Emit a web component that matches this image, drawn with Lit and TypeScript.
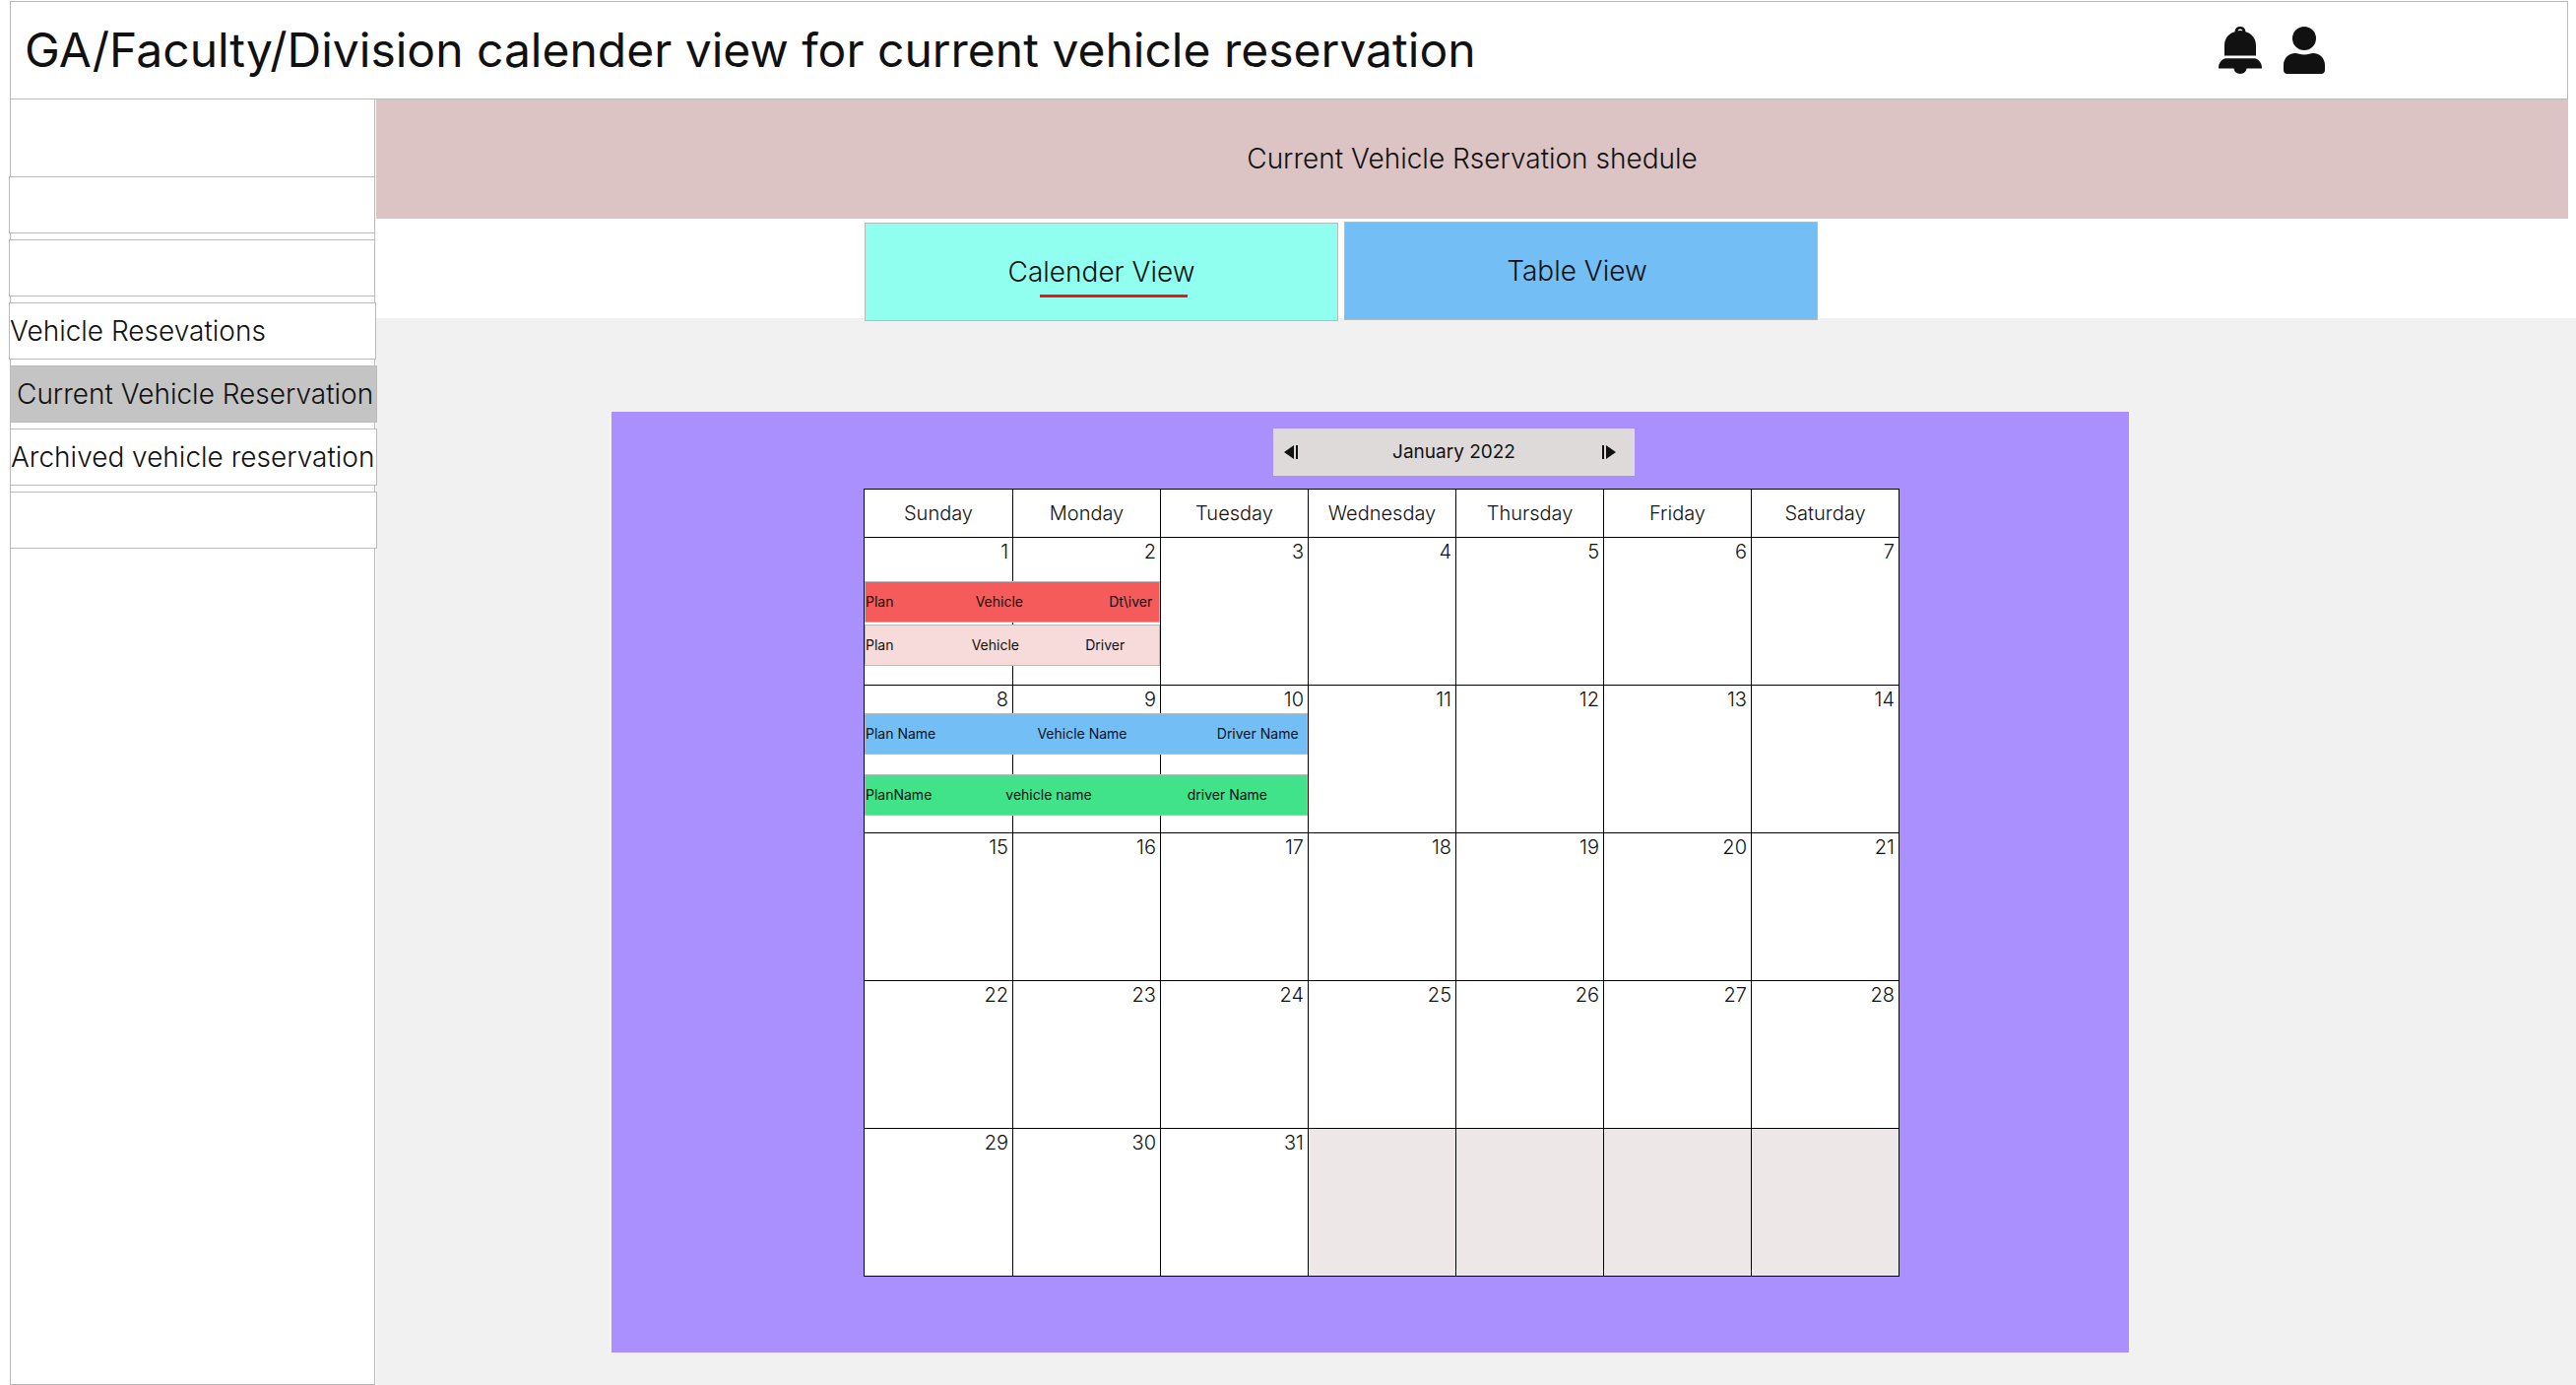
import { LitElement, html, css, svg, nothing } from "lit";
import { customElement, state } from "lit/decorators.js";
import { classMap } from "lit/directives/class-map.js";

interface Reservation {
  kind: string;
  span: number;
  labels: string[];
}

const DAYS = ["Sunday", "Monday", "Tuesday", "Wednesday", "Thursday", "Friday", "Saturday"];

const RESERVATIONS: Record<number, Reservation[]> = {
  1: [
    { kind: "red", span: 2, labels: ["Plan", "Vehicle", "Dt\\iver"] },
    { kind: "pink", span: 2, labels: ["Plan", "Vehicle", "Driver"] },
  ],
  8: [
    { kind: "blue", span: 3, labels: ["Plan Name", "Vehicle Name", "Driver Name"] },
    { kind: "green", span: 3, labels: ["PlanName", "vehicle name", "driver Name"] },
  ],
};

const bell = svg`
  <path d="M6 29.5V19C6 12 10.500 6.600 16.600 5.200C16.500 2 19 0 22 0S27.500 2 27.400 5.200C33.500 6.600 38 12 38 19V29.500Z" fill="#111"/>
  <path d="M19.500 4.200C19.900 2.900 20.800 2.400 22 2.400S24.100 2.900 24.500 4.200Q22 3.600 19.500 4.200Z" fill="#fff"/>
  <path d="M7 32.300H37C41 33.500 44 37 44 42V42.500H28.500A6.600 6.600 0 0 1 15.500 42.500H0V42C0 37 3 33.500 7 32.300Z" fill="#111"/>`;

const person = svg`
  <circle cx="21" cy="12" r="12" fill="#111"/>
  <path d="M12 27C14.500 27 17 28.500 21 28.500S27.500 27 30 27C37 27 42 32.500 42 39V44C42 46.500 40.500 48 38 48H4C1.500 48 0 46.500 0 44V39C0 32.500 5 27 12 27Z" fill="#111"/>`;

@customElement("month-calendar")
export class MonthCalendar extends LitElement {
  static styles = css`
    :host { display: block; }
    .month {
      width: 100%;
      border-collapse: collapse;
      table-layout: fixed;
      background: #fff;
      color: #111;
      font-size: 20px;
      line-height: 24px;
    }
    .name, .day {
      border: 1px solid #000;
      box-sizing: border-box;
      font-weight: 300;
    }
    .name { height: 49px; padding: 0; text-align: center; }
    .name:first-child { width: 151px; }
    .day {
      position: relative;
      height: 150px;
      padding: 2px 4px;
      text-align: right;
      vertical-align: top;
    }
    .blank { background: #ede7e7; }
    .event {
      position: absolute;
      z-index: 1;
      left: 0;
      box-sizing: border-box;
      height: 42px;
      display: grid;
      align-items: center;
      border: 1px solid #b9baba;
      font-size: 14px;
      line-height: 18px;
      font-weight: 400;
      text-align: left;
      white-space: nowrap;
    }
    .red { top: 44px; background: #f65b5b; grid-template-columns: 112fr 136fr 51fr; }
    .pink { top: 88px; background: #f7dada; grid-template-columns: 108fr 116fr 75fr; }
    .blue { top: 28px; background: #73bff5; grid-template-columns: 174fr 182fr 91fr; }
    .green { top: 90px; background: #40e28a; grid-template-columns: 142fr 184fr 121fr; }
  `;

  private renderDay(day: number) {
    if (day > 31) return html`<td class="day blank"></td>`;
    return html`<td class="day">${day}${(RESERVATIONS[day] ?? []).map(
      (r) => html`<div class="event ${r.kind}" style="width: ${r.span * 100}%">
        ${r.labels.map((l) => html`<span>${l}</span>`)}
      </div>`
    )}</td>`;
  }

  render() {
    return html`
      <table class="month" aria-label="January 2022">
        <thead>
          <tr>${DAYS.map((d) => html`<th class="name" scope="col">${d}</th>`)}</tr>
        </thead>
        <tbody>
          ${[0, 1, 2, 3, 4].map(
            (w) => html`<tr>${DAYS.map((_, i) => this.renderDay(w * 7 + i + 1))}</tr>`
          )}
        </tbody>
      </table>`;
  }
}

@customElement("app-root")
export class AppRoot extends LitElement {
  static styles = css`
    :host {
      display: flex;
      flex-direction: column;
      box-sizing: border-box;
      min-height: 100vh;
      padding: 1px 0 0 10px;
      background: #fff;
      color: #111;
      font-family: Inter, "Liberation Sans", sans-serif;
      font-weight: 300;
      font-size: 28px;
      line-height: 34px;
    }
    button {
      font: inherit;
      color: inherit;
      border: 0;
      padding: 0;
      background: none;
      cursor: pointer;
    }
    a { color: inherit; text-decoration: none; }
    svg { display: block; }
    .header {
      box-sizing: border-box;
      height: 100px;
      margin-right: 8px;
      padding: 0 246px 0 14px;
      border: 1px solid #b9baba;
      display: flex;
      align-items: center;
      justify-content: space-between;
    }
    .title { margin: 0; font-size: 48px; line-height: 60px; font-weight: 400; }
    .actions { display: flex; gap: 22px; }
    .body { flex: 1; display: grid; grid-template-columns: 371px 1fr; column-gap: 1px; }
    .side {
      box-sizing: border-box;
      border: 1px solid #b9baba;
      border-top: 0;
      padding-top: 78px;
    }
    .nav {
      position: relative;
      margin: 0;
      padding: 0;
      list-style: none;
      display: flex;
      flex-direction: column;
      gap: 6px;
    }
    .item {
      box-sizing: border-box;
      height: 58px;
      margin: 0 -1px 0 -2px;
      border: 1px solid #b9baba;
      background: #fff;
      display: flex;
      align-items: center;
      white-space: nowrap;
    }
    .parent { margin-right: -2px; }
    .sub { margin: 0 -3px 0 -1px; }
    .current { background: #c4c4c4; padding-left: 6px; }
    .main { display: flex; flex-direction: column; min-width: 0; }
    .banner {
      box-sizing: border-box;
      margin: 0 8px 0 0;
      height: 121px;
      padding-bottom: 2px;
      display: flex;
      align-items: center;
      justify-content: center;
      background: #dcc4c4;
      font-size: 28px;
      line-height: 34px;
      font-weight: 300;
    }
    .tabs {
      position: relative;
      box-sizing: border-box;
      height: 101px;
      padding-top: 3px;
      display: grid;
      grid-template-columns: 496fr 481fr 6fr 481fr 770fr;
    }
    .tab { height: 100px; border: 1px solid #b9baba; }
    .calendar-tab { position: relative; grid-column: 2; margin-top: 1px; background: #90ffef; }
    .table-tab { grid-column: 4; padding-right: 8px; background: #73bff5; }
    .mark {
      position: absolute;
      left: 37%;
      bottom: 23px;
      width: 150px;
      height: 3px;
      background: #f51414;
    }
    .stage {
      flex: 1;
      padding: 95px 0 33px;
      background: #f1f1f1;
      display: grid;
      grid-template-columns: 239fr 1541fr 454fr;
    }
    .panel {
      grid-column: 2;
      padding: 17px 0 77px;
      background: #aa90ff;
      display: grid;
      grid-template-rows: 48px 1fr;
      row-gap: 13px;
    }
    .picker-row { display: grid; grid-template-columns: 672fr 367fr 502fr; }
    .picker {
      grid-column: 2;
      background: #dedada;
      display: grid;
      grid-template-columns: 1fr auto 1fr;
      align-items: center;
      font-size: 19px;
      line-height: 24px;
      font-weight: 400;
    }
    .prev { justify-self: start; margin-left: 11px; }
    .next { justify-self: end; margin-right: 19px; }
    .month-row { display: grid; grid-template-columns: 256fr 1052fr 233fr; }
    .month-row month-calendar { grid-column: 2; }
  `;

  @state() private view = "calendar";

  render() {
    return html`
      <header class="header">
        <h1 class="title">GA/Faculty/Division calender view for current vehicle reservation</h1>
        <div class="actions">
          <button aria-label="Notifications"><svg width="44" height="48" viewBox="0 0 44 48">${bell}</svg></button>
          <button aria-label="Account"><svg width="42" height="48" viewBox="0 0 42 48">${person}</svg></button>
        </div>
      </header>
      <div class="body">
        <aside class="side">
          <ul class="nav">
            <li class="item"></li>
            <li class="item"></li>
            <li class="item parent"><a href="#reservations">Vehicle Resevations</a></li>
            <li class="item sub current"><a href="#current" aria-current="page">Current Vehicle Reservation</a></li>
            <li class="item sub"><a href="#archived">Archived vehicle reservation</a></li>
            <li class="item sub"></li>
          </ul>
        </aside>
        <main class="main">
          <h2 class="banner">Current Vehicle Rservation shedule</h2>
          <div class="tabs">
            <button class=${classMap({ tab: true, "calendar-tab": true })} @click=${() => (this.view = "calendar")}>
              Calender View${this.view === "calendar" ? html`<span class="mark"></span>` : nothing}
            </button>
            <button class="tab table-tab" @click=${() => (this.view = "table")}>Table View</button>
          </div>
          <div class="stage">
            <section class="panel">
              <div class="picker-row">
                <div class="picker">
                  <button class="prev" aria-label="Previous month">
                    <svg width="14" height="14" viewBox="0 0 14 14"><path d="M0 7L10 0V14ZM12 0H14V14H12Z" fill="#111"/></svg>
                  </button>
                  <span>January 2022</span>
                  <button class="next" aria-label="Next month">
                    <svg width="14" height="14" viewBox="0 0 14 14"><path d="M14 7L4 0V14ZM0 0H2V14H0Z" fill="#111"/></svg>
                  </button>
                </div>
              </div>
              <div class="month-row"><month-calendar></month-calendar></div>
            </section>
          </div>
        </main>
      </div>`;
  }
}
